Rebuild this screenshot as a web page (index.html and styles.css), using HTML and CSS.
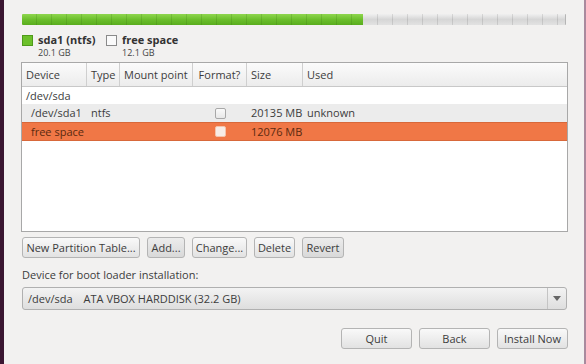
FILE: index.html
```html
<!DOCTYPE html>
<html>
<head>
<meta charset="utf-8">
<link rel="stylesheet" href="styles.css">
</head>
<body>
<div class="strip"></div>
<div class="main">
  <div class="bar">
    <div class="bar-used"></div>
    <div class="bar-free"></div>
  </div>
  <div class="legend">
    <div class="leg-item">
      <span class="swatch green"></span>
      <div class="leg-text"><div class="leg-name">sda1 (ntfs)</div><div class="leg-size">20.1 GB</div></div>
    </div>
    <div class="leg-item">
      <span class="swatch empty"></span>
      <div class="leg-text"><div class="leg-name">free space</div><div class="leg-size">12.1 GB</div></div>
    </div>
  </div>
  <div class="table">
    <div class="row head">
      <div class="c c1">Device</div>
      <div class="c c2">Type</div>
      <div class="c c3">Mount point</div>
      <div class="c c4">Format?</div>
      <div class="c c5">Size</div>
      <div class="c c6">Used</div>
    </div>
    <div class="row r-white">
      <div class="c c1">/dev/sda</div>
      <div class="c c2"></div><div class="c c3"></div><div class="c c4"></div><div class="c c5"></div><div class="c c6"></div>
    </div>
    <div class="row r-grey">
      <div class="c c1 ind">/dev/sda1</div>
      <div class="c c2">ntfs</div>
      <div class="c c3"></div>
      <div class="c c4"><span class="cb"></span></div>
      <div class="c c5">20135 MB</div>
      <div class="c c6">unknown</div>
    </div>
    <div class="row r-sel">
      <div class="c c1 ind">free space</div>
      <div class="c c2"></div>
      <div class="c c3"></div>
      <div class="c c4"><span class="cb sel"></span></div>
      <div class="c c5">12076 MB</div>
      <div class="c c6"></div>
    </div>
  </div>
  <div class="btnrow">
    <button class="btn w1">New Partition Table...</button>
    <button class="btn w2">Add...</button>
    <button class="btn w3">Change...</button>
    <button class="btn w4">Delete</button>
    <button class="btn w5">Revert</button>
  </div>
  <div class="label">Device for boot loader installation:</div>
  <div class="combo">
    <div class="combo-text"><span class="dev">/dev/sda</span>ATA VBOX HARDDISK (32.2 GB)</div>
    <div class="combo-arrow"><span class="tri"></span></div>
  </div>
  <div class="actions">
    <button class="btn act">Quit</button>
    <button class="btn act">Back</button>
    <button class="btn act">Install Now</button>
  </div>
</div>
<div class="edge"></div>
</body>
</html>
```
FILE: styles.css
```css
html, body {
  margin: 0;
  padding: 0;
}
body {
  width: 586px;
  height: 364px;
  overflow: hidden;
  display: flex;
  background: #f2f1f0;
  font-family: "Open Sans", "DejaVu Sans", sans-serif;
  font-size: 11px;
  color: #3c3c3c;
}
.strip {
  width: 4px;
  background: #3a1631;
  flex: none;
}
.edge {
  width: 2px;
  background: #a98a9e;
  flex: none;
}
.main {
  flex: 1;
  padding: 14px 16px 0 17px;
  display: flex;
  flex-direction: column;
}
.bar {
  margin-left: 1px;
  width: 544px;
  height: 11px;
  display: flex;
  border-radius: 1px;
  overflow: hidden;
}
.bar-used {
  width: 341px;
  background:
    repeating-linear-gradient(90deg, transparent 0 14px, rgba(40,90,10,0.18) 14px 15px),
    linear-gradient(#8fd64e, #6cbf2c 50%, #5aad1e);
}
.bar-free {
  flex: 1;
  background:
    repeating-linear-gradient(90deg, transparent 0 14px, rgba(0,0,0,0.10) 14px 15px),
    linear-gradient(#f0f0f0, #d6d6d6 50%, #e2e2e2);
  border-right: 1px solid #b5b5b5;
}
.legend {
  display: flex;
  margin-top: 8px;
  margin-left: 1px;
  height: 29px;
}
.leg-item {
  display: flex;
  align-items: flex-start;
}
.leg-item:first-child { width: 84px; }
.swatch {
  width: 9px;
  height: 9px;
  margin-top: 2px;
  margin-right: 5px;
  flex: none;
}
.swatch.green {
  background: #6cc02a;
  border: 1px solid #4f9a1a;
}
.swatch.empty {
  background: #fafafa;
  border: 1px solid #8a8a8a;
}
.leg-name {
  font-weight: bold;
  font-size: 11px;
  line-height: 14px;
  color: #333;
}
.leg-size {
  font-size: 9px;
  line-height: 11px;
  color: #444;
}
.table {
  width: 545px;
  height: 168px;
  border: 1px solid #a8a8a8;
  background: #fff;
  display: flex;
  flex-direction: column;
}
.row {
  display: flex;
  height: 17px;
  line-height: 17px;
}
.row.head {
  height: 23px;
  line-height: 23px;
  background: linear-gradient(#fbfbfb, #ececec);
  border-bottom: 1px solid #c8c8c8;
}
.c {
  padding-left: 4px;
  box-sizing: border-box;
  white-space: nowrap;
  overflow: hidden;
}
.head .c { border-right: 1px solid #cfcfcf; }
.head .c6 { border-right: none; }
.c1 { width: 65px; }
.c2 { width: 33px; }
.c3 { width: 73px; }
.c4 { width: 54px; display: flex; justify-content: center; align-items: center; padding-left: 0; }
.c5 { width: 56px; }
.c6 { flex: 1; }
.ind { padding-left: 9px; }
.r-grey { background: #ececec; height: 18px; line-height: 18px; }
.r-sel { background: #f07746; color: #5a2a10; height: 17px; line-height: 17px; border-top: 1px solid #d8683a; border-bottom: 1px solid #d8683a; }
.cb {
  width: 9px;
  height: 9px;
  border: 1px solid #a8a8a8;
  border-radius: 2px;
  background: linear-gradient(#fafafa, #e8e8e8);
}
.cb.sel {
  border-color: #f5c3ab;
  background: #f7ece6;
}
.btnrow {
  display: flex;
  gap: 7px;
  margin-top: 5px;
  margin-left: 1px;
}
.btn {
  font-family: inherit;
  font-size: 11px;
  color: #3c3c3c;
  height: 21px;
  padding: 0;
  border: 1px solid #b4b4b4;
  border-radius: 3px;
  background: linear-gradient(#f9f9f9, #e2e2e2);
  box-sizing: border-box;
}
.w1 { width: 118px; }
.w2 { width: 38px; }
.w3 { width: 55px; }
.w4 { width: 41px; }
.w5 { width: 42px; background: linear-gradient(#ececec, #d9d9d9); }
.w2 { background: linear-gradient(#ececec, #d9d9d9); }
.label {
  margin-top: 9px;
  margin-left: 1px;
  height: 16px;
  line-height: 16px;
}
.combo {
  margin-top: 4px;
  margin-left: 1px;
  width: 545px;
  height: 23px;
  border: 1px solid #b0b0b0;
  border-radius: 3px;
  background: linear-gradient(#f3f3f3, #dedede);
  box-sizing: border-box;
  display: flex;
  align-items: center;
}
.combo-text {
  flex: 1;
  padding-left: 5px;
}
.dev { margin-right: 11px; }
.combo-arrow {
  width: 18px;
  height: 100%;
  border-left: 1px solid #c4c4c4;
  display: flex;
  align-items: center;
  justify-content: center;
}
.tri {
  width: 0;
  height: 0;
  border-left: 4px solid transparent;
  border-right: 4px solid transparent;
  border-top: 5px solid #666;
}
.actions {
  display: flex;
  justify-content: flex-end;
  gap: 7px;
  margin-top: 18px;
}
.act {
  width: 71px;
}
```
